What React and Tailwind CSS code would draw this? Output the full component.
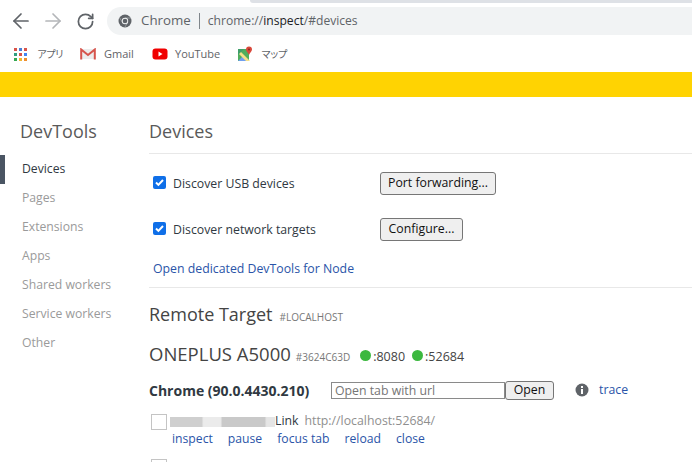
import React from "react";
import { ArrowLeft, ArrowRight, RotateCw } from "lucide-react";

const sidebarItems = ["Pages", "Extensions", "Apps", "Shared workers", "Service workers", "Other"];
const targetActions = ["inspect", "pause", "focus tab", "reload", "close"];

function ChromeLogo() {
  return (
    <svg width="16" height="16" viewBox="0 0 16 16">
      <circle cx="8" cy="8" r="6.5" fill="#5f6368" />
      <path d="M8 5h6M10.6 9.5l-3 5.2M5.4 9.5l-3-5.2" stroke="#aeb1b5" strokeWidth="0.7" />
      <circle cx="8" cy="8" r="3.2" fill="#f1f3f4" />
      <circle cx="8" cy="8" r="2.3" fill="#5f6368" />
    </svg>
  );
}

function AppsIcon() {
  const colors = ["#d9534a", "#4a7fd8", "#d9534a", "#2f9e7f", "#d9534a", "#4285f4", "#34a853", "#f2b632", "#ef8f2f"];
  return (
    <div className="grid grid-cols-3 gap-[2px] w-[13px] h-[13px]">
      {colors.map((c, i) => (
        <div key={i} className="w-[3px] h-[3px]" style={{ backgroundColor: c }} />
      ))}
    </div>
  );
}

function GmailIcon() {
  return (
    <svg width="16" height="12" viewBox="0 0 16 12">
      <path d="M1 1h14v10H1z" fill="#ececec" />
      <path d="M1.2 11.5V1.5L8 7l6.8-5.5v10" fill="none" stroke="#d6544c" strokeWidth="2" />
    </svg>
  );
}

function YouTubeIcon() {
  return (
    <svg width="16" height="12" viewBox="0 0 16 12">
      <rect x="0.5" y="0.5" width="15" height="11" rx="3" fill="#f00000" />
      <path d="M6.5 3.5v5l4-2.5z" fill="#fff" />
    </svg>
  );
}

function MapsIcon() {
  return (
    <svg width="16" height="16" viewBox="0 0 16 16">
      <path d="M1 3h11v12H1z" fill="#4fae5c" />
      <path d="M1 15l5.5-5.5L12 15z" fill="#6f9ff0" />
      <path d="M1 3l12 12H9L1 7z" fill="#f5e08a" />
      <path d="M1 3h6L1 9z" fill="#3f9f6a" />
      <path d="M12 0.5a3 3 0 0 1 3 3c0 2-2 3-3 5.5c-1-2.500-3-3.500-3-5.500a3 3 0 0 1 3-3z" fill="#d9483b" />
      <circle cx="12" cy="3.500" r="1" fill="#8a2a22" />
    </svg>
  );
}

function Checkbox() {
  return (
    <span className="mb-[2px] w-[13px] h-[13px] rounded-[2px] bg-[#0f6fe8] flex items-center justify-center">
      <svg width="11" height="11" viewBox="0 0 11 11">
        <path d="M2 5.500l2.400 2.400L9 3" fill="none" stroke="#fff" strokeWidth="2" />
      </svg>
    </span>
  );
}

function Btn({ children, className }) {
  return (
    <div className={`border border-[#767676] rounded-[3px] bg-[#efefef] text-[12.3px] text-[#111] flex items-center justify-center ${className}`}>
      {children}
    </div>
  );
}

export default function App() {
  return (
    <div
      className="w-[692px] h-[462px] overflow-hidden bg-white flex flex-col"
      style={{ fontFamily: '"Open Sans", "Noto Sans CJK JP", sans-serif' }}
    >
      {/* Tab strip edge */}
      <div className="h-[3px] shrink-0 ml-[250px] bg-[#dee1e6] rounded-bl-[4px]" />

      {/* Toolbar */}
      <div className="h-[33px] shrink-0 flex items-center pl-[9px] pt-[3px]">
        <ArrowLeft size={24} strokeWidth={1.7} className="text-[#5f6368]" />
        <ArrowRight size={24} strokeWidth={1.7} className="text-[#b4b6b9] ml-[8px]" />
        <RotateCw size={19} strokeWidth={2.2} className="text-[#5f6368] ml-[11px]" />
        <div className="ml-[12px] flex-1 h-[28px] bg-[#f1f3f4] rounded-l-full flex items-center pl-[10px] text-[13.300px]">
          <ChromeLogo />
          <span className="ml-[8px] text-[#5f6368]">Chrome</span>
          <span className="ml-[8px] w-px h-[16px] bg-[#80868b]" />
          <span className="ml-[8px] text-[12.100px] text-[#5f6368]">
            chrome://<span className="text-[#202124]">inspect</span>/#devices
          </span>
        </div>
      </div>

      {/* Bookmarks */}
      <div className="h-[36px] shrink-0 flex items-center pl-[14px] text-[#5f6368] whitespace-nowrap">
        <AppsIcon />
        <span className="ml-[10px] w-[26px] text-[10px] tracking-[-1.300px]">アプリ</span>
        <span className="ml-[17px]"><GmailIcon /></span>
        <span className="ml-[8px] w-[30px] text-[11px]">Gmail</span>
        <span className="ml-[18px]"><YouTubeIcon /></span>
        <span className="ml-[7px] w-[44px] text-[11px]">YouTube</span>
        <span className="ml-[18px]"><MapsIcon /></span>
        <span className="ml-[8px] w-[24px] text-[10px] tracking-[-1.800px]">マップ</span>
      </div>

      {/* Infobar */}
      <div className="h-[25px] shrink-0 bg-[#ffd302]" />

      <div className="flex flex-1 min-h-0">
        {/* Sidebar */}
        <div className="w-[149px] shrink-0 pt-[22px]">
          <div className="pl-[20px] text-[18px] leading-[24px] text-[#5a5a5a]">DevTools</div>
          <div className="mt-[12px] border-l-[5px] border-[#4a5563] pl-[17px] h-[29px] flex items-center text-[12.200px] text-[#303942]">
            Devices
          </div>
          {sidebarItems.map((item) => (
            <div key={item} className="pl-[22px] h-[29px] flex items-center text-[12.200px] text-[#9a9a9a]">
              {item}
            </div>
          ))}
        </div>

        {/* Main */}
        <div className="flex-1 min-w-0 pt-[22px]">
          <div className="text-[18px] leading-[24px] text-[#5a5a5a]">Devices</div>
          <div className="mt-[10px] h-px bg-[#e8e8e8]" />

          <div className="pl-[4px] mt-[16px] h-[26px] flex items-center">
            <div className="w-[227px] flex items-center">
              <Checkbox />
              <span className="ml-[7px] pt-[2px] text-[12.300px] text-[#303942]">Discover USB devices</span>
            </div>
            <Btn className="w-[116px] h-[23px]">Port forwarding...</Btn>
          </div>
          <div className="pl-[4px] mt-[20px] h-[26px] flex items-center">
            <div className="w-[227px] flex items-center">
              <Checkbox />
              <span className="ml-[7px] pt-[2px] text-[12.300px] text-[#303942]">Discover network targets</span>
            </div>
            <Btn className="w-[83px] h-[23px]">Configure...</Btn>
          </div>
          <div className="pl-[4px] mt-[17px] text-[12.300px] leading-[20px] text-[#2a54a8]">Open dedicated DevTools for Node</div>
          <div className="mt-[8px] h-px bg-[#e8e8e8]" />

          <div className="mt-[14px] flex items-baseline leading-[24px]">
            <span className="text-[18px] text-[#444]">Remote Target</span>
            <span className="ml-[7px] text-[10px] text-[#777]">#LOCALHOST</span>
          </div>
          <div className="mt-[13px] flex items-baseline leading-[24px]">
            <span className="text-[18.500px] text-[#444]">ONEPLUS A5000</span>
            <span className="ml-[5px] text-[10px] text-[#777]">#3624C63D</span>
            <span className="ml-[10px] self-center w-[11px] h-[11px] rounded-full bg-[#3cb83f]" />
            <span className="ml-[2px] text-[12.500px] text-[#444]">:8080</span>
            <span className="ml-[7px] self-center w-[11px] h-[11px] rounded-full bg-[#3cb83f]" />
            <span className="ml-[2px] text-[12.500px] text-[#444]">:52684</span>
          </div>

          <div className="mt-[10px] h-[22px] flex items-center">
            <span className="w-[182px] text-[14px] font-bold text-[#303942] whitespace-nowrap">Chrome (90.0.4430.210)</span>
            <div className="w-[174px] h-[17px] border border-[#8a8a8a] pl-[3px] text-[12.300px] leading-[15px] text-[#757575]">
              Open tab with url
            </div>
            <Btn className="w-[49px] h-[19px]">Open</Btn>
            <svg className="ml-[21px]" width="14" height="14" viewBox="0 0 14 14">
              <circle cx="7" cy="7" r="6.500" fill="#5f6368" />
              <rect x="6" y="6" width="2" height="5" fill="#fff" />
              <rect x="6" y="3" width="2" height="2" fill="#fff" />
            </svg>
            <span className="ml-[10px] text-[12.300px] text-[#2a54a8]">trace</span>
          </div>

          <div className="mt-[12px] flex items-center h-[17px] ml-[2px]">
            <span className="w-[16px] h-[16px] border border-[#c4c4c4] bg-white" />
            <span className="ml-[3px] w-[105px] h-[10px] bg-[linear-gradient(90deg,#cfcfcf_0%,#cfcfcf_30%,#ebebeb_32%,#ebebeb_48%,#c9c9c9_50%,#c9c9c9_90%,#e5e5e5_92%)]" />
            <span className="text-[12.300px] text-[#303942]">Link</span>
            <span className="ml-[6px] text-[12.300px] text-[#8f8f8f]">http://localhost:52684/</span>
          </div>
          <div className="pl-[23px] flex gap-[15px] text-[12.200px] leading-[17px] text-[#2a54a8]">
            {targetActions.map((action) => (
              <span key={action}>{action}</span>
            ))}
          </div>
          <div className="mt-[12px] ml-[2px] w-[16px] h-[16px] border border-[#c4c4c4]" />
        </div>
      </div>
    </div>
  );
}
